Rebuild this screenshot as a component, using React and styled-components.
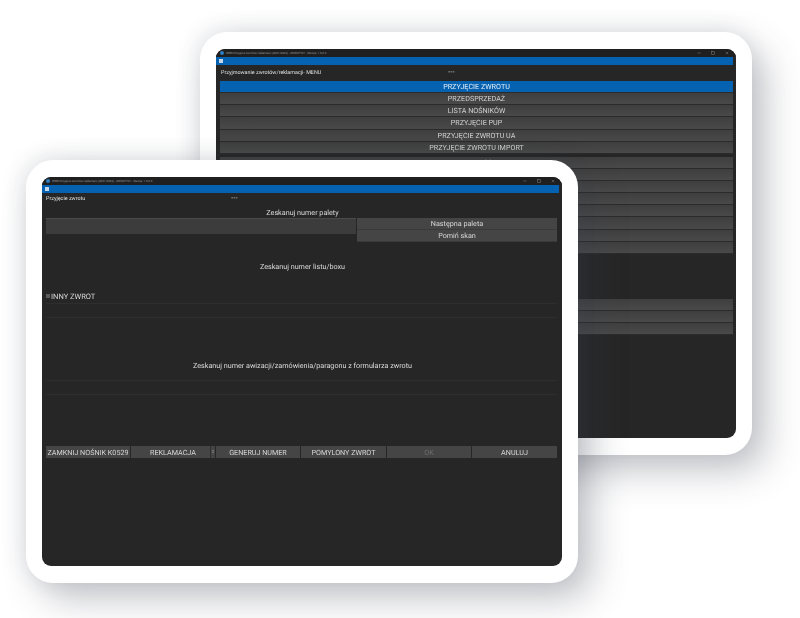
import React from 'react';
import styled, { createGlobalStyle } from 'styled-components';
import { Minus, Square, X } from 'lucide-react';

const GlobalStyle = createGlobalStyle`
  html, body {
    margin: 0;
    padding: 0;
    background: #fff;
  }
  body {
    font-family: Roboto, "Liberation Sans", sans-serif;
    text-rendering: geometricPrecision;
    overflow: hidden;
  }
`;

const Stage = styled.div`
  position: relative;
  width: 800px;
  height: 618px;
  overflow: hidden;
  background: #fff;
`;

// tablets sit on a free canvas and overlap each other
const Tablet = styled.div`
  position: absolute;
  left: ${p => p.$left}px;
  top: ${p => p.$top}px;
  box-sizing: border-box;
  width: 552px;
  height: 423px;
  padding: 17px 16px;
  background: #fff;
  border-radius: 27px;
  box-shadow: 14px 16px 36px rgba(60, 64, 80, 0.3), -3px -3px 22px rgba(60, 64, 80, 0.12);
`;

const Screen = styled.div`
  display: flex;
  flex-direction: column;
  height: 100%;
  overflow: hidden;
  background: #262626;
  border-radius: 9px;
  color: #d8d8d8;
`;

const TitleBar = styled.div`
  display: flex;
  align-items: center;
  justify-content: space-between;
  flex: 0 0 8px;
  padding: 0 5px 0 4px;
  background: #1f1f1f;
  color: #9a9a9a;
  font-size: 2.9px;
  white-space: nowrap;
`;

const TitleLeft = styled.div`
  display: flex;
  align-items: center;
  gap: 2px;
`;

const AppDot = styled.span`
  width: 4px;
  height: 4px;
  border-radius: 50%;
  background: #2f7fc4;
`;

const WindowControls = styled.div`
  display: flex;
  align-items: center;
  gap: 10px;
  padding-right: 2px;
  color: #b5b5b5;
`;

const MenuBar = styled.div`
  display: flex;
  align-items: center;
  flex: 0 0 ${p => p.$height}px;
  margin-right: 3px;
  padding-left: 3px;
  background: #0562b1;
`;

const MenuIcon = styled.span`
  width: 4px;
  height: 4px;
  background: #c6d7ea;
`;

const Content = styled.div`
  display: flex;
  flex-direction: column;
  flex: 1;
  padding: 0 3px 0 4px;
  filter: blur(0.3px);
`;

const Header = styled.div`
  display: flex;
  align-items: center;
  height: ${p => p.$height}px;
  font-size: 5.4px;
  color: #e0e0e0;
`;

const HeaderTitle = styled.span`
  flex: 0 0 ${p => p.$width}px;
  padding-left: ${p => p.$indent || 0}px;
  box-sizing: border-box;
`;

const HeaderMark = styled.span`
  margin-top: -4px;
  font-size: 4px;
  color: #aaa;
`;

const MenuList = styled.div`
  display: flex;
  flex-direction: column;
  margin-bottom: ${p => p.$gap}px;
`;

const MenuRow = styled.div`
  display: flex;
  align-items: center;
  justify-content: center;
  box-sizing: border-box;
  height: 12.13px;
  border-bottom: 1px solid #2b2b2b;
  background: ${p => (p.$active ? '#0562b1' : 'linear-gradient(#3f3f3f, #494949)')};
  color: ${p => (p.$active ? '#e4edf6' : '#d2d2d2')};
  font-size: 7.2px;
`;

const Caption = styled.div`
  display: flex;
  align-items: center;
  justify-content: center;
  height: ${p => p.$height}px;
  margin-top: ${p => p.$top || 0}px;
  font-size: 7.2px;
  color: #dcdcdc;
`;

const ScanRow = styled.div`
  display: flex;
  gap: 1px;
  width: 511px;
`;

const ScanInput = styled.div`
  flex: 0 0 310px;
  height: 16px;
  background: #3c3c3c;
  border-top: 1px solid #4a4a4a;
  box-sizing: border-box;
`;

const ScanActions = styled.div`
  display: flex;
  flex-direction: column;
  flex: 1;
`;

const ScanButton = styled.div`
  display: flex;
  align-items: center;
  justify-content: center;
  height: 12px;
  background: #454545;
  border-bottom: 1px solid #3a3a3a;
  box-sizing: border-box;
  font-size: 7.2px;
  color: #d8d8d8;
`;

const CheckRow = styled.div`
  display: flex;
  align-items: center;
  gap: 1px;
  margin-top: 18px;
  height: 12px;
  font-size: 7.5px;
  color: #d8d8d8;
`;

const CheckBox = styled.span`
  width: 4px;
  height: 4px;
  background: #5a5a5a;
`;

const FaintField = styled.div`
  width: 511px;
  height: ${p => p.$height}px;
  margin-top: ${p => p.$top || 0}px;
  box-sizing: border-box;
  border-top: 1px solid #2e2e2e;
  border-bottom: 1px solid #2e2e2e;
`;

const Footer = styled.div`
  display: grid;
  grid-template-columns: 84px 84px 84px 85px 84px 85px;
  column-gap: 1px;
  width: 511px;
  margin-top: 51px;
`;

const FooterButton = styled.div`
  display: flex;
  align-items: center;
  justify-content: center;
  height: 12px;
  background: #454545;
  font-size: 7.2px;
  white-space: nowrap;
  color: ${p => (p.$disabled ? '#6d6d6d' : '#d8d8d8')};
`;

const SelectButton = styled(FooterButton)`
  justify-content: space-between;
  padding-left: 19px;
`;

const SelectArrow = styled.span`
  display: flex;
  align-items: center;
  justify-content: center;
  width: 4px;
  height: 100%;
  border-left: 1px solid #2f2f2f;
  font-size: 5px;
`;

const firstGroup = [
  'PRZYJĘCIE ZWROTU',
  'PRZEDSPRZEDAŻ',
  'LISTA NOŚNIKÓW',
  'PRZYJĘCIE PUP',
  'PRZYJĘCIE ZWROTU UA',
  'PRZYJĘCIE ZWROTU IMPORT',
];

const secondGroup = ['ZADANIA PRACOWNIKA', '', '', '', '', '', '', ''];

const WindowChrome = ({ title, menuHeight }) => (
  <>
    <TitleBar>
      <TitleLeft>
        <AppDot />
        {title}
      </TitleLeft>
      <WindowControls>
        <Minus size={4} />
        <Square size={4} />
        <X size={4} />
      </WindowControls>
    </TitleBar>
    <MenuBar $height={menuHeight}>
      <MenuIcon />
    </MenuBar>
  </>
);

const MenuWindow = () => (
  <Screen>
    <WindowChrome menuHeight={8} title="WMS Przyjęcie zwrotów/reklamacji (2021/2022) - ZWROTY01 - Wersja: 1.6.0.0" />
    <Content>
      <Header $height={16}>
        <HeaderTitle $width={228} $indent={1}>Przyjmowanie zwrotów/reklamacji- MENU</HeaderTitle>
        <HeaderMark>===</HeaderMark>
      </Header>
      <MenuList $gap={3}>
        {firstGroup.map((label, i) => (
          <MenuRow key={label} $active={i === 0}>
            {label}
          </MenuRow>
        ))}
      </MenuList>
      <MenuList $gap={45}>
        {secondGroup.map((label, i) => (
          <MenuRow key={i}>{label}</MenuRow>
        ))}
      </MenuList>
      <MenuList $gap={0}>
        <MenuRow />
        <MenuRow />
        <MenuRow />
      </MenuList>
    </Content>
  </Screen>
);

const ReturnWindow = () => (
  <Screen>
    <WindowChrome menuHeight={7.5} title="WMS Przyjęcie zwrotów/reklamacji (2021/2022) - ZWROTY01 - Wersja: 1.6.0.0" />
    <Content>
      <Header $height={13.5}>
        <HeaderTitle $width={185}>Przyjęcie zwrotu</HeaderTitle>
        <HeaderMark>===</HeaderMark>
      </Header>
      <Caption $height={12}>Zeskanuj numer palety</Caption>
      <ScanRow>
        <ScanInput />
        <ScanActions>
          <ScanButton>Następna paleta</ScanButton>
          <ScanButton>Pomiń skan</ScanButton>
        </ScanActions>
      </ScanRow>
      <Caption $height={12} $top={18}>Zeskanuj numer listu/boxu</Caption>
      <CheckRow>
        <CheckBox />
        INNY ZWROT
      </CheckRow>
      <FaintField $height={15} $top={1} />
      <Caption $height={12} $top={41}>Zeskanuj numer awizacji/zamówienia/paragonu z formularza zwrotu</Caption>
      <FaintField $height={15} $top={9} />
      <Footer>
        <FooterButton>ZAMKNIJ NOŚNIK K0529</FooterButton>
        <SelectButton>
          REKLAMACJA
          <SelectArrow>↕</SelectArrow>
        </SelectButton>
        <FooterButton>GENERUJ NUMER</FooterButton>
        <FooterButton>POMYLONY ZWROT</FooterButton>
        <FooterButton $disabled>OK</FooterButton>
        <FooterButton>ANULUJ</FooterButton>
      </Footer>
    </Content>
  </Screen>
);

const App = () => (
  <Stage>
    <GlobalStyle />
    <Tablet $left={200} $top={32}>
      <MenuWindow />
    </Tablet>
    <Tablet $left={26} $top={160}>
      <ReturnWindow />
    </Tablet>
  </Stage>
);

export default App;
